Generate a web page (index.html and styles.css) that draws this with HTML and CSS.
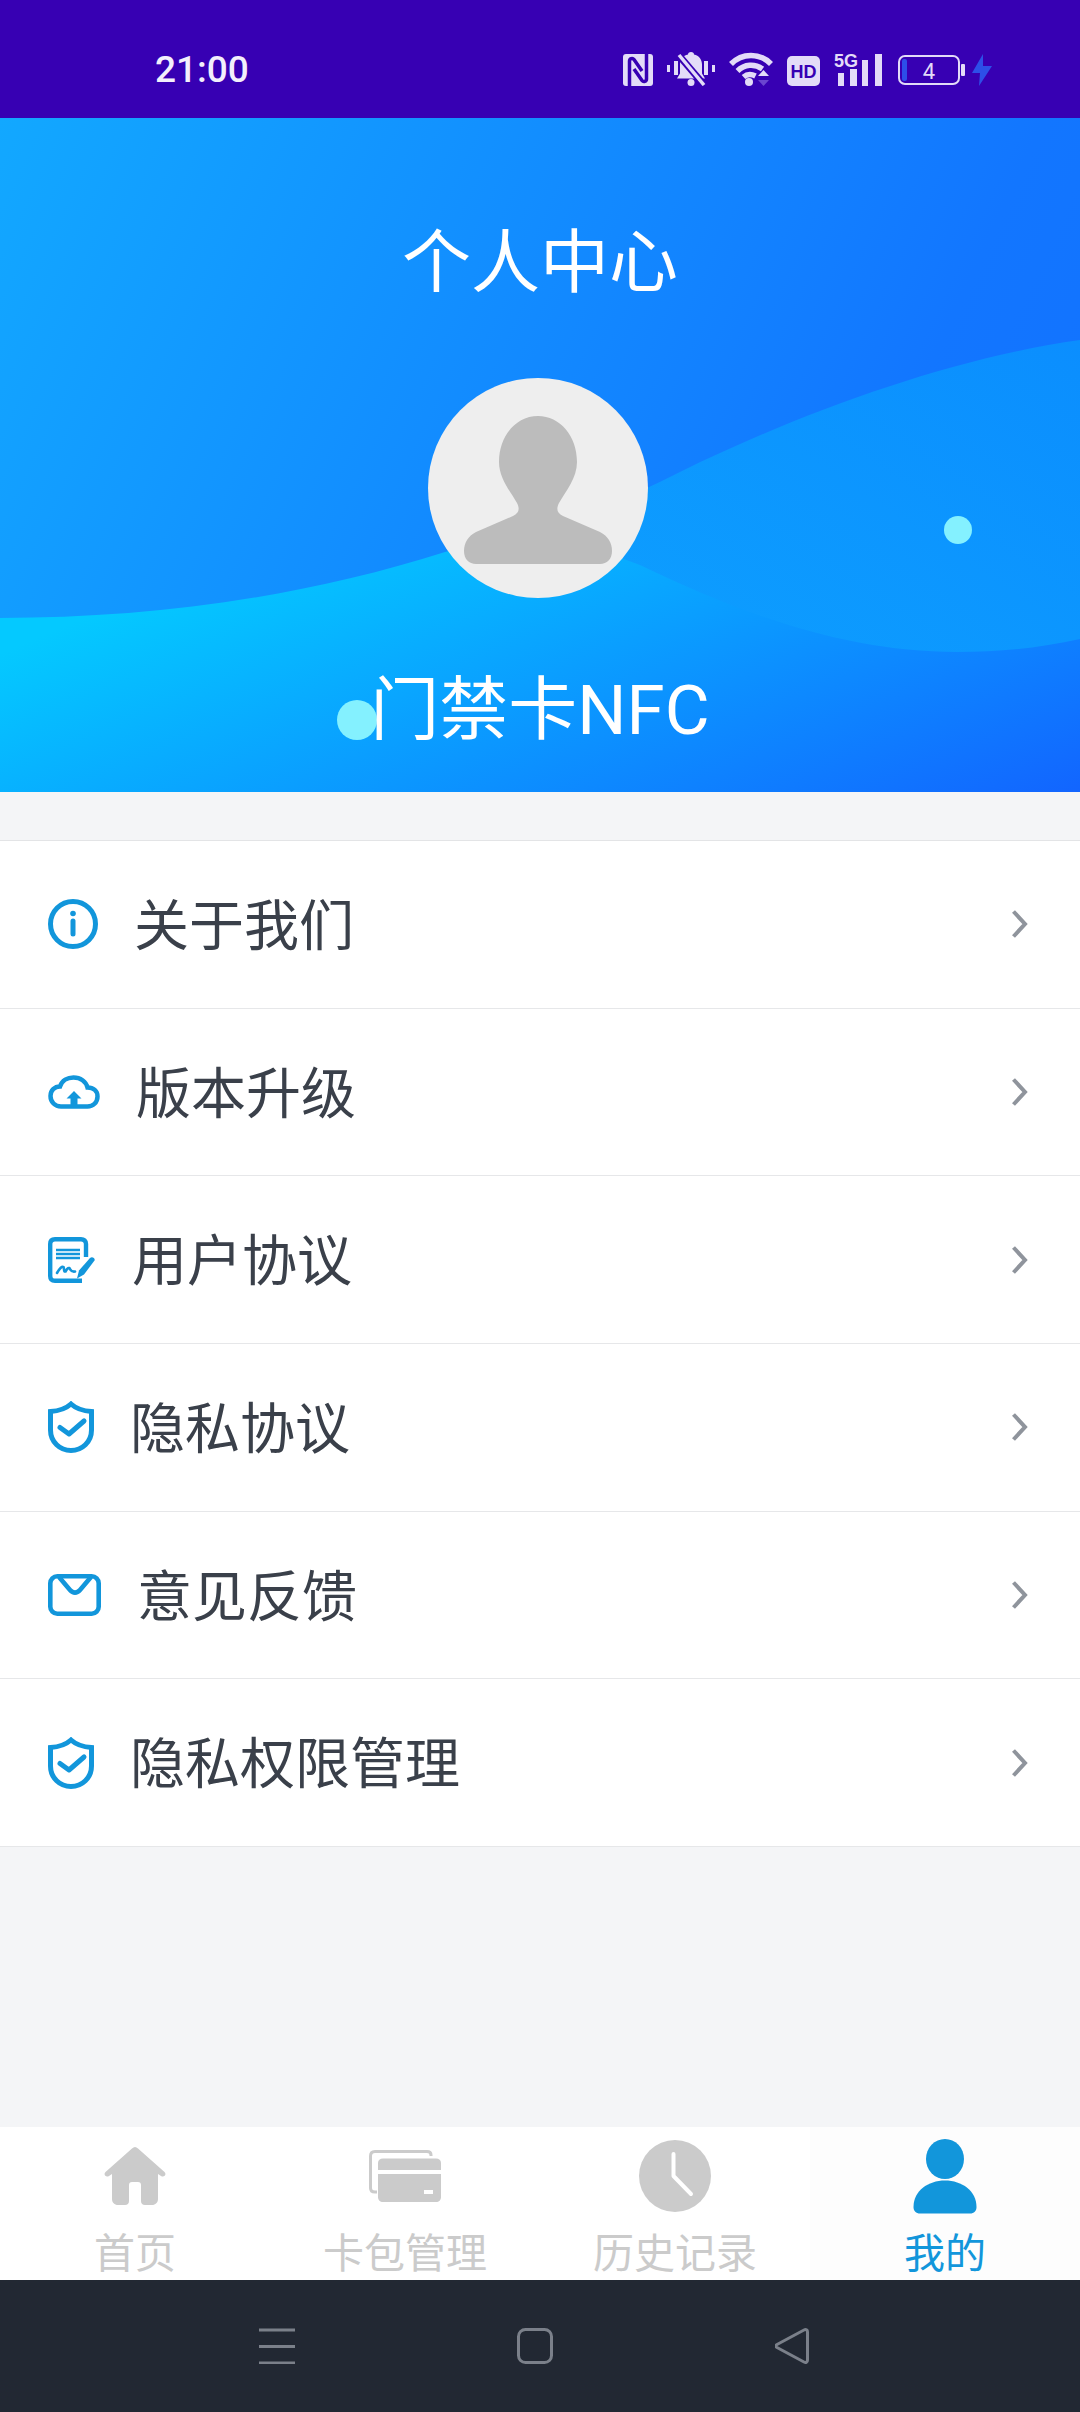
FILE: index.html
```html
<!DOCTYPE html>
<html lang="zh-CN">
<head>
  <meta charset="UTF-8" />
  <meta name="viewport" content="width=device-width, initial-scale=1.0" />
  <title>个人中心</title>
  <link rel="stylesheet" href="styles.css">
</head>
<body>
  <div class="status-bar">
    <span class="time">21:00</span>
    <div class="status-icons">
      <svg width="30" height="32" viewBox="0 0 30 32"><rect width="30" height="32" rx="3" fill="#e3dbf8"/><path d="M6.500 32V7c0-2.500 3-3.500 4.500-1.500l8 11.500M23.500 0v25c0 2.500-3 3.500-4.500 1.500l-8-11.500" fill="none" stroke="#3700b3" stroke-width="3.500"/></svg>
      <svg width="48" height="34" viewBox="0 0 48 34"><g fill="#e3dbf8"><rect x="0" y="13" width="3" height="7"/><rect x="7" y="9" width="4" height="14"/><rect x="37" y="9" width="4" height="14"/><rect x="45" y="13" width="3" height="7"/><path d="M24 0c2 0 3 1 3 2.500 5 1 8 5 8 10v9l3 5H10l3-5v-9c0-5 3-9 8-10C21 1 22 0 24 0z"/><circle cx="24" cy="30.500" r="3.500"/></g><path d="M9 0l29 34" stroke="#3700b3" stroke-width="7"/><path d="M12 3l25 30" stroke="#e3dbf8" stroke-width="3.500"/></svg>
      <svg width="44" height="36" viewBox="0 0 44 36"><g fill="none" stroke="#e3dbf8" stroke-width="5.500"><path d="M2 14c11-11.500 29-11.500 40 0"/><path d="M8.500 21c7-7 17-7.500 25-2"/><path d="M14.500 27c3.500-3 8-3 12-1"/></g><circle cx="20" cy="32" r="4" fill="#e3dbf8"/><path d="M29 26l5.500-6 5.500 6z" fill="#e3dbf8"/><path d="M29 30l5.500 6 5.500-6z" fill="#6a45d0"/></svg>
      <svg width="33" height="30" viewBox="0 0 33 30"><rect width="33" height="30" rx="5" fill="#e3dbf8"/><text x="16.500" y="22" text-anchor="middle" class="hd-text">HD</text></svg>
      <svg width="48" height="34" viewBox="0 0 48 34"><text x="0" y="15" class="fiveg-text">5G</text><g fill="#e3dbf8"><rect x="4" y="21" width="6" height="13"/><rect x="16" y="17" width="7" height="17"/><rect x="28" y="8" width="6" height="26"/><rect x="41" y="2" width="7" height="32"/></g></svg>
      <svg width="69" height="32" viewBox="0 0 69 32"><rect x="3" y="2" width="60" height="28" rx="6" fill="none" stroke="#e3dbf8" stroke-width="2"/><rect x="6" y="5" width="5" height="22" rx="2" fill="#2d4fe8"/><rect x="65" y="10" width="4" height="12" rx="1" fill="#e3dbf8"/><text x="33" y="25" text-anchor="middle" class="batt-text">4</text></svg>
      <svg class="bolt" width="20" height="32" viewBox="0 0 20 32"><path d="M11 0L0 19h8l-1 13L20 12h-9z" fill="#2d4fe8"/></svg>
    </div>
  </div>

  <div class="header">
    <svg class="waves" width="1080" height="674" viewBox="0 0 1080 674">
      <defs>
        <linearGradient id="waveLow" x1="0" y1="0.45" x2="1" y2="1">
          <stop offset="0" stop-color="#04c9ff"/>
          <stop offset="1" stop-color="#1265ff"/>
        </linearGradient>
        <linearGradient id="waveBand" x1="0" y1="1" x2="1" y2="0">
          <stop offset="0" stop-color="#0ea6ff"/>
          <stop offset="1" stop-color="#0b8efe"/>
        </linearGradient>
      </defs>
      <path d="M400 470C500 430 600 395 680 354C800 295 950 240 1080 222V674H400z" fill="url(#waveBand)"/>
      <path d="M0 500C150 500 300 480 445 434C510 414 570 420 640 447C750 500 850 534 957 534C1000 534 1040 530 1080 521V674H0z" fill="url(#waveLow)"/>
    </svg>
    <span class="dot dot-right"></span>
    <span class="dot dot-left"></span>
    <div class="title">个人中心</div>
    <svg class="avatar" width="220" height="220" viewBox="0 0 220 220">
      <circle cx="110" cy="110" r="110" fill="#eeeeee"/>
      <path d="M110 38C132 38 149 58 149 84C149 100 138 113 131 125C128 131 129 135 135 138L172 154C180 158 184 165 184 173C184 181 179 186 172 186H48C41 186 36 181 36 173C36 165 40 158 48 154L85 138C91 135 92 131 89 125C82 113 71 100 71 84C71 58 88 38 110 38Z" fill="#bcbcbc"/>
    </svg>
    <div class="name">门禁卡NFC</div>
  </div>

  <div class="menu">
    <div class="menu-item">
      <svg class="ic" width="50" height="50" viewBox="0 0 50 50"><circle cx="25" cy="25" r="22.500" fill="none" stroke="#1296db" stroke-width="5"/><circle cx="25" cy="14.500" r="2.800" fill="#1296db"/><path d="M25 22v13" stroke="#1296db" stroke-width="5" stroke-linecap="round"/></svg>
      <span>关于我们</span>
      <svg class="chevron" width="17" height="30" viewBox="0 0 17 30"><path d="M2.500 2.500L14 15 2.500 27.500" fill="none" stroke="#8f949c" stroke-width="4"/></svg>
    </div>
    <div class="menu-item">
      <svg class="ic" width="52" height="34" viewBox="0 0 52 34"><path d="M13 31.500C7 31.500 2.500 27 2.500 21C2.500 15.500 6.500 11.500 12 11.500C14 5.500 19.500 2.500 25.500 2.500C32.500 2.500 38 6.500 39.500 12.500C45.500 12.500 49.500 16 49.500 21.500C49.500 27.500 45 31.500 39.500 31.500Z" fill="none" stroke="#1296db" stroke-width="4.500"/><path d="M26 16L33.500 23.500H29.500V32H22.500V23.500H18.500Z" fill="#1296db"/></svg>
      <span>版本升级</span>
      <svg class="chevron" width="17" height="30" viewBox="0 0 17 30"><path d="M2.500 2.500L14 15 2.500 27.500" fill="none" stroke="#8f949c" stroke-width="4"/></svg>
    </div>
    <div class="menu-item">
      <svg class="ic" width="48" height="46" viewBox="0 0 48 46"><path d="M38 20V7C38 4 36 2.200 33 2.200H7C4 2.200 2.200 4 2.200 7V39C2.200 42 4 43.800 7 43.800H34" fill="none" stroke="#1296db" stroke-width="4.400"/><path d="M8 13H32M8 17H32M8 21H32" stroke="#1296db" stroke-width="2.400"/><path d="M9 36C12 31 14 29 15.500 30C16.500 32 15.500 35 17.500 34.500C19.500 31 21 30 22 32C23 34 24 35 27 34.500" fill="none" stroke="#1296db" stroke-width="2.600" stroke-linecap="round"/><path d="M42 21C44 19 47.500 21 46.500 23.500L36 37.500L29 41.500L31 33.500Z" fill="#1296db"/></svg>
      <span>用户协议</span>
      <svg class="chevron" width="17" height="30" viewBox="0 0 17 30"><path d="M2.500 2.500L14 15 2.500 27.500" fill="none" stroke="#8f949c" stroke-width="4"/></svg>
    </div>
    <div class="menu-item">
      <svg class="ic" width="46" height="52" viewBox="0 0 46 52"><path d="M23 3C28 7.500 35 10 43.500 10.500V29C43.500 41 34 49.500 23 49.500C12 49.500 2.500 41 2.500 29V10.500C11 10 18 7.500 23 3Z" fill="none" stroke="#1296db" stroke-width="5"/><path d="M12 26.500L21 33L36 20" fill="none" stroke="#1296db" stroke-width="5" stroke-linecap="round" stroke-linejoin="round"/></svg>
      <span>隐私协议</span>
      <svg class="chevron" width="17" height="30" viewBox="0 0 17 30"><path d="M2.500 2.500L14 15 2.500 27.500" fill="none" stroke="#8f949c" stroke-width="4"/></svg>
    </div>
    <div class="menu-item">
      <svg class="ic" width="53" height="42" viewBox="0 0 53 42"><rect x="2.300" y="2.300" width="48.400" height="37.400" rx="7" fill="none" stroke="#1296db" stroke-width="4.600"/><path d="M11 3L22 16C25 19.500 29 19.500 32 16L43 3" fill="none" stroke="#1296db" stroke-width="4.600"/></svg>
      <span>意见反馈</span>
      <svg class="chevron" width="17" height="30" viewBox="0 0 17 30"><path d="M2.500 2.500L14 15 2.500 27.500" fill="none" stroke="#8f949c" stroke-width="4"/></svg>
    </div>
    <div class="menu-item">
      <svg class="ic" width="46" height="52" viewBox="0 0 46 52"><path d="M23 3C28 7.500 35 10 43.500 10.500V29C43.500 41 34 49.500 23 49.500C12 49.500 2.500 41 2.500 29V10.500C11 10 18 7.500 23 3Z" fill="none" stroke="#1296db" stroke-width="5"/><path d="M12 26.500L21 33L36 20" fill="none" stroke="#1296db" stroke-width="5" stroke-linecap="round" stroke-linejoin="round"/></svg>
      <span>隐私权限管理</span>
      <svg class="chevron" width="17" height="30" viewBox="0 0 17 30"><path d="M2.500 2.500L14 15 2.500 27.500" fill="none" stroke="#8f949c" stroke-width="4"/></svg>
    </div>
  </div>

  <div class="spacer"></div>

  <div class="tabbar">
    <div class="tab">
      <div class="tab-icon"><svg width="62" height="58" viewBox="0 0 62 58"><path d="M31 0C32 0 33 .5 34 1.500L60.500 25C63 27.500 60 31 57 29L54 27V52C54 55.500 51.500 58 48 58H41C38.500 58 37 56.500 37 54V38C37 36 36 35 34 35H28C26 35 25 36 25 38V54C25 56.500 23.500 58 21 58H14C10.500 58 8 55.500 8 52V27L5 29C2 31-1 27.500 1.500 25L28 1.500C29 .5 30 0 31 0Z" fill="#cbcbcb"/></svg></div>
      <div class="tab-label">首页</div>
    </div>
    <div class="tab">
      <div class="tab-icon"><svg width="72" height="52" viewBox="0 0 72 52"><path d="M62 6V5C62 2.500 60 1.500 58 1.500H6C3 1.500 1.500 3 1.500 6V38C1.500 41 3 42 6 42H8" fill="none" stroke="#cbcbcb" stroke-width="3"/><path d="M9 24H72V47C72 50 70 52 67 52H14C11 52 9 50 9 47Z" fill="#cbcbcb"/><path d="M9 20V13C9 10 11 8.500 14 8.500H67C70 8.500 72 10 72 13V20Z" fill="#cbcbcb"/><rect x="55" y="40" width="9" height="4" fill="#fff"/></svg></div>
      <div class="tab-label">卡包管理</div>
    </div>
    <div class="tab">
      <div class="tab-icon"><svg width="72" height="74" viewBox="0 0 72 74"><circle cx="36" cy="37" r="36" fill="#cbcbcb"/><path d="M34.500 15V37L52 55" fill="none" stroke="#fff" stroke-width="4" stroke-linecap="round" stroke-linejoin="round"/></svg></div>
      <div class="tab-label">历史记录</div>
    </div>
    <div class="tab active">
      <div class="tab-icon"><svg width="64" height="75" viewBox="0 0 64 75"><ellipse cx="32" cy="20" rx="19" ry="20" fill="#1296db"/><path d="M32 41.500C49 41.500 63.500 52 63.500 68C63.500 72 61 74.500 57 74.500H7C3 74.500 .5 72 .5 68C.5 52 15 41.500 32 41.500Z" fill="#1296db"/></svg></div>
      <div class="tab-label">我的</div>
    </div>
  </div>

  <div class="navbar">
    <svg width="36" height="36" viewBox="0 0 36 36"><path d="M0 2H36M0 18.500H36M0 35H36" stroke="#7b808a" stroke-width="3"/></svg>
    <svg width="36" height="36" viewBox="0 0 36 36"><rect x="1.500" y="1.500" width="33" height="33" rx="7" fill="none" stroke="#7b808a" stroke-width="3"/></svg>
    <svg width="34" height="36" viewBox="0 0 34 36"><path d="M2 16.500L29 2C31 1 32.500 2 32.500 4V32C32.500 34 31 35 29 34L2 19.500C.5 18.500 .5 17.500 2 16.500Z" fill="none" stroke="#7b808a" stroke-width="3"/></svg>
  </div>
</body>
</html>
```

FILE: styles.css
```css
* { box-sizing: border-box; }
body {
  margin: 0;
  width: 1080px;
  height: 2412px;
  display: flex;
  flex-direction: column;
  font-family: Roboto, "Noto Sans CJK SC", sans-serif;
  background: #f4f5f7;
  overflow: hidden;
}
svg { display: block; flex-shrink: 0; }

/* status bar */
.status-bar {
  height: 118px;
  padding: 0 88px 0 155px;
  display: flex;
  align-items: center;
  justify-content: space-between;
  background: #3700b3;
  color: #f3effc;
}
.time {
  font-size: 37px;
  font-weight: 500;
  margin-top: 20px;
}
.status-icons {
  display: flex;
  align-items: flex-end;
  gap: 14px;
  margin-top: 18px;
}
.status-icons .bolt { margin-left: -7px; }
.hd-text {
  font: bold 18px "Liberation Sans", sans-serif;
  fill: #3700b3;
}
.fiveg-text {
  font: bold 18px "Liberation Sans", sans-serif;
  fill: #e3dbf8;
}
.batt-text {
  font: 22px Roboto, sans-serif;
  fill: #e3dbf8;
}

/* header */
.header {
  position: relative;
  height: 674px;
  display: flex;
  flex-direction: column;
  align-items: center;
  padding-top: 96px;
  background: linear-gradient(115deg, #12a8ff 0%, #1276ff 75%, #1270ff 100%);
  color: #fff;
  font-size: 69px;
  overflow: hidden;
}
.waves {
  position: absolute;
  left: 0;
  top: 0;
}
.title, .name, .avatar { position: relative; }
.title, .name { line-height: 100px; }
.avatar { margin: 64px 4px 0 0; }
.name { margin-top: 63px; }
.dot {
  position: absolute;
  border-radius: 50%;
  background: #84f1ff;
}
.dot-right { left: 944px; top: 398px; width: 28px; height: 28px; }
.dot-left { left: 337px; top: 582px; width: 40px; height: 40px; }

/* menu */
.menu {
  margin-top: 48px;
  background: #fff;
  border-top: 1px solid #e3e4e6;
}
.menu-item {
  height: 167.7px;
  padding: 0 52px 0 48px;
  display: flex;
  align-items: center;
  border-bottom: 1px solid #e6e7e9;
  font-size: 55px;
  color: #3a404a;
}
.menu-item span {
  margin-left: 36px;
  padding-bottom: 7px;
}
.chevron { margin-left: auto; }
.spacer { flex: 1; }

/* bottom tabs */
.tabbar {
  height: 153px;
  display: flex;
  background: #fff;
}
.tab {
  flex: 1;
  padding-top: 11px;
  text-align: center;
  color: #cbcbcb;
}
.tab.active {
  background: #fdfdfd;
  color: #1296db;
}
.tab-icon {
  height: 76px;
  display: flex;
  align-items: center;
  justify-content: center;
}
.tab-label {
  margin-top: 16px;
  font-size: 41px;
  line-height: 48px;
}

/* system nav */
.navbar {
  height: 132px;
  padding-left: 259px;
  display: flex;
  align-items: center;
  gap: 222px;
  background: #222833;
}
```
